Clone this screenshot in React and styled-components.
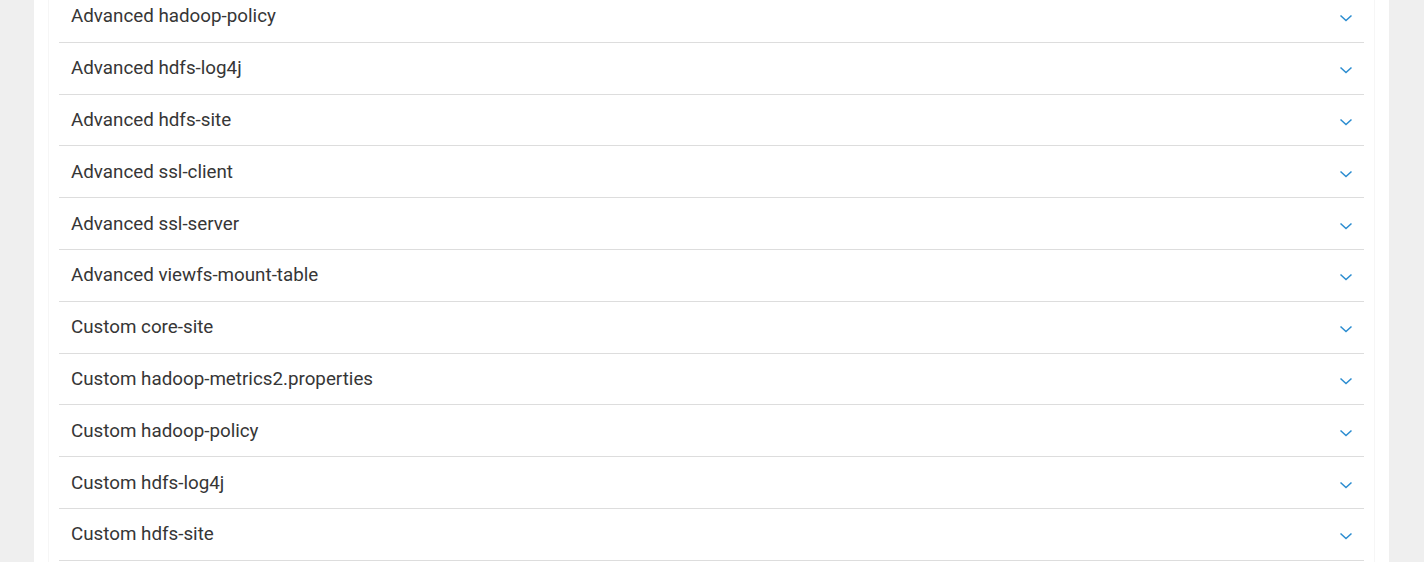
import React from "react";
import styled, { createGlobalStyle } from "styled-components";

const GlobalStyle = createGlobalStyle`
  html, body {
    margin: 0;
    padding: 0;
    background: #efefef;
    overflow: hidden;
  }
  body {
    font-family: Roboto, "Liberation Sans", sans-serif;
  }
`;

const Page = styled.div`
  height: 562px;
  padding: 0 35px 0 34px;
  overflow: hidden;
`;

const Panel = styled.section`
  display: flow-root;
  background: #fff;
  height: 100%;
  padding: 0 14px;
`;

const Inner = styled.div`
  height: 100%;
  border-left: 1px solid #f6f6f6;
  border-right: 1px solid #f6f6f6;
  padding: 0 10px;
  overflow: hidden;
`;

const List = styled.ul`
  list-style: none;
  margin: -9px 0 0;
  padding: 0;
`;

const Row = styled.li`
  display: flex;
  align-items: center;
  justify-content: space-between;
  box-sizing: border-box;
  height: 51.8px;
  padding: 0 11px 0 12px;
  border-bottom: 1px solid #dddddd;
  color: #363636;
  font-size: 18.8px;
  cursor: pointer;
`;

const ChevronIcon = styled.svg`
  margin-top: 4px;
  flex-shrink: 0;
`;

const Chevron = () => (
  <ChevronIcon width="14" height="8" viewBox="0 0 14 8" fill="none">
    <path d="M1.5 1.5l5.5 5 5.5-5" stroke="#2a8cd0" strokeWidth="1.5" />
  </ChevronIcon>
);

const sections = [
  "Advanced hadoop-policy",
  "Advanced hdfs-log4j",
  "Advanced hdfs-site",
  "Advanced ssl-client",
  "Advanced ssl-server",
  "Advanced viewfs-mount-table",
  "Custom core-site",
  "Custom hadoop-metrics2.properties",
  "Custom hadoop-policy",
  "Custom hdfs-log4j",
  "Custom hdfs-site",
];

export default function App() {
  return (
    <>
      <GlobalStyle />
      <Page>
        <Panel>
          <Inner>
            <List>
              {sections.map((name) => (
                <Row key={name}>
                  <span>{name}</span>
                  <Chevron />
                </Row>
              ))}
            </List>
          </Inner>
        </Panel>
      </Page>
    </>
  );
}
